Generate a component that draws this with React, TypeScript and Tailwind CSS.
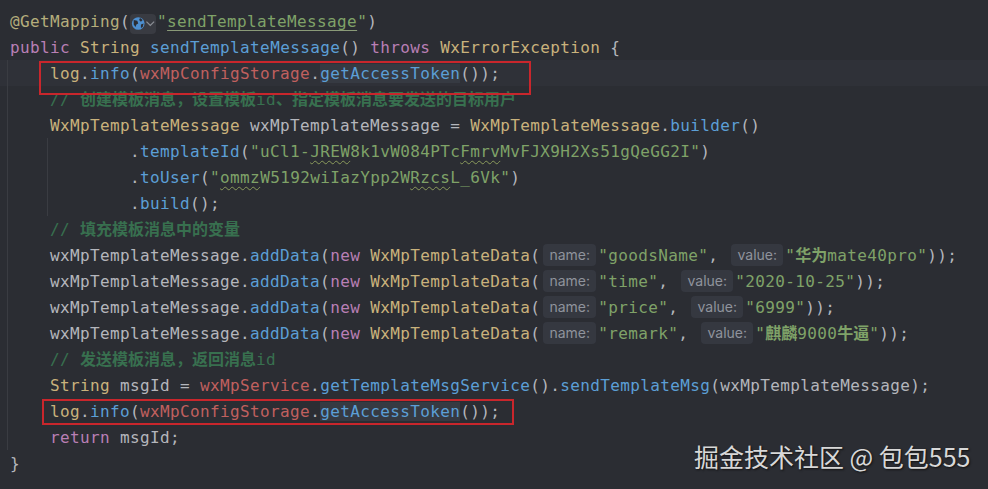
import React from "react";

const K = ({ children }: { children: React.ReactNode }) => <span className="text-[#b97fb5]">{children}</span>;
const T = ({ children }: { children: React.ReactNode }) => <span className="text-[#c9b27c]">{children}</span>;
const M = ({ children }: { children: React.ReactNode }) => <span className="text-[#5c9fd6]">{children}</span>;
const F = ({ children }: { children: React.ReactNode }) => <span className="text-[#c0605f]">{children}</span>;
const S = ({ children }: { children: React.ReactNode }) => <span className="text-[#7fa268]">{children}</span>;
const C = ({ children }: { children: React.ReactNode }) => <span className="text-[#38704f]">{children}</span>;
const Z = ({ children }: { children: React.ReactNode }) => (
  <span className="font-bold tracking-normal text-[16px]">{children}</span>
);
const W = ({ children }: { children: React.ReactNode }) => (
  <span className="underline decoration-wavy decoration-[#8a9a5b] decoration-1 underline-offset-[3px]">{children}</span>
);

const Line = ({ children, className = "" }: { children?: React.ReactNode; className?: string }) => (
  <div className={`h-[26px] leading-[28px] whitespace-pre ${className}`}>{children}</div>
);

const Hint = ({ label, w }: { label: string; w: string }) => (
  <span
    className={`inline-block h-[22px] align-[1px] leading-[22px] ml-[3px] mr-[2px] rounded-[4px] bg-[#353840] text-center text-[#8f939c] text-[14px] tracking-normal font-['Inter',sans-serif] ${w}`}
  >
    {label}
  </span>
);

const AddData = ({ name, value }: { name: string; value: React.ReactNode }) => (
  <Line>
    {"    wxMpTemplateMessage."}
    <M>addData</M>(<K>new</K> <T>WxMpTemplateData</T>(
    <Hint label="name:" w="w-[53px]" />
    <S>{name}</S>, <Hint label="value:" w="w-[52px]" />
    <S>{value}</S>));
  </Line>
);

const LogLine = ({ strong }: { strong?: boolean }) => (
  <Line className={strong ? "" : "bg-[#2f3138] -mx-[10px] px-[10px]"}>
    {"    "}
    <T>log</T>.<M>info</M>(<F>wxMpConfigStorage</F>.
    <span className="bg-[#363a42]"><M>getAccessToken</M></span>());
  </Line>
);

export default function App() {
  return (
    <div className="relative w-[988px] h-[489px] overflow-hidden bg-[#2b2d33] pt-2 pl-[10px] text-[16px] tracking-[0.37px] text-[#b4b6bc] font-['DejaVu_Sans_Mono','Noto_Sans_CJK_SC',monospace]">
      <div className="absolute left-[7px] top-[60px] h-[390px] w-px bg-[#3a3c42]" />
      <div className="absolute left-[47px] top-[138px] h-[78px] w-px bg-[#3a3c42]" />

      <Line>
        <span className="text-[#b5ad7c]">@GetMapping</span>(
        <span className="inline-flex h-[20px] w-[26px] align-[-4px] items-center rounded-[4px] bg-[#393b42] mr-px">
          <svg width="15" height="15" viewBox="0 0 16 16" className="ml-px">
            <circle cx="8" cy="8" r="7" fill="#4d8fd0" />
            <path d="M3 4l4 1 1 3-2 1-1 3-2-3zM10 2l3 2-2 2-2-2zM11 9l3-1-1 4-2 1z" fill="#2b2d33" />
          </svg>
          <svg width="11" height="11" viewBox="0 0 11 11" fill="none" stroke="#8b8e95" strokeWidth="1.3">
            <path d="M1.5 3.5l4 4 4-4" />
          </svg>
        </span>
        <S>"<span className="underline decoration-[#8a9a78] underline-offset-[3px]">sendTemplateMessage</span>"</S>)
      </Line>
      <Line>
        <K>public</K> <T>String</T> <M>sendTemplateMessage</M>() <K>throws</K> <T>WxErrorException</T> {"{"}
      </Line>
      <LogLine />
      <Line>
        {"    "}
        <C>// <Z>创建模板消息，设置模板</Z>id<Z>、指定模板消息要发送的目标用户</Z></C>
      </Line>
      <Line>
        {"    "}
        <T>WxMpTemplateMessage</T> wxMpTemplateMessage = <T>WxMpTemplateMessage</T>.<M>builder</M>()
      </Line>
      <Line>
        {"            ."}
        <M>templateId</M>(<S>"uCl1-<W>JREW</W>8k1vW084PTc<W>Fmrv</W>MvFJX9H2Xs51gQeGG2I"</S>)
      </Line>
      <Line>
        {"            ."}
        <M>toUser</M>(<S>"<W>ommz</W>W5192wiIazYpp2W<W>Rzcs</W>L_6Vk"</S>)
      </Line>
      <Line>
        {"            ."}
        <M>build</M>();
      </Line>
      <Line>
        {"    "}
        <C>// <Z>填充模板消息中的变量</Z></C>
      </Line>
      <AddData name={'"goodsName"'} value={<>"<Z>华为</Z>mate40pro"</>} />
      <AddData name={'"time"'} value={'"2020-10-25"'} />
      <AddData name={'"price"'} value={'"6999"'} />
      <AddData name={'"remark"'} value={<>"<Z>麒麟</Z>9000<Z>牛逼</Z>"</>} />
      <Line>
        {"    "}
        <C>// <Z>发送模板消息，返回消息</Z>id</C>
      </Line>
      <Line>
        {"    "}
        <T>String</T> msgId = <F>wxMpService</F>.<M>getTemplateMsgService</M>().<M>sendTemplateMsg</M>(wxMpTemplateMessage);
      </Line>
      <LogLine strong />
      <Line>
        {"    "}
        <K>return</K> msgId;
      </Line>
      <Line>{"}"}</Line>

      <div className="absolute left-[39px] top-[61px] h-[34px] w-[492px] border-2 border-[#c9262c]" />
      <div className="absolute left-[42px] top-[399px] h-[26px] w-[472px] border-2 border-[#c9262c]" />

      <div className="absolute left-[694px] top-[439px] text-[25px] leading-[34px] tracking-normal text-[#d8d8d8] font-['Noto_Sans_CJK_SC',sans-serif] [text-shadow:1px_1px_2px_#111]">
        掘金技术社区 @ 包包555
      </div>
    </div>
  );
}
